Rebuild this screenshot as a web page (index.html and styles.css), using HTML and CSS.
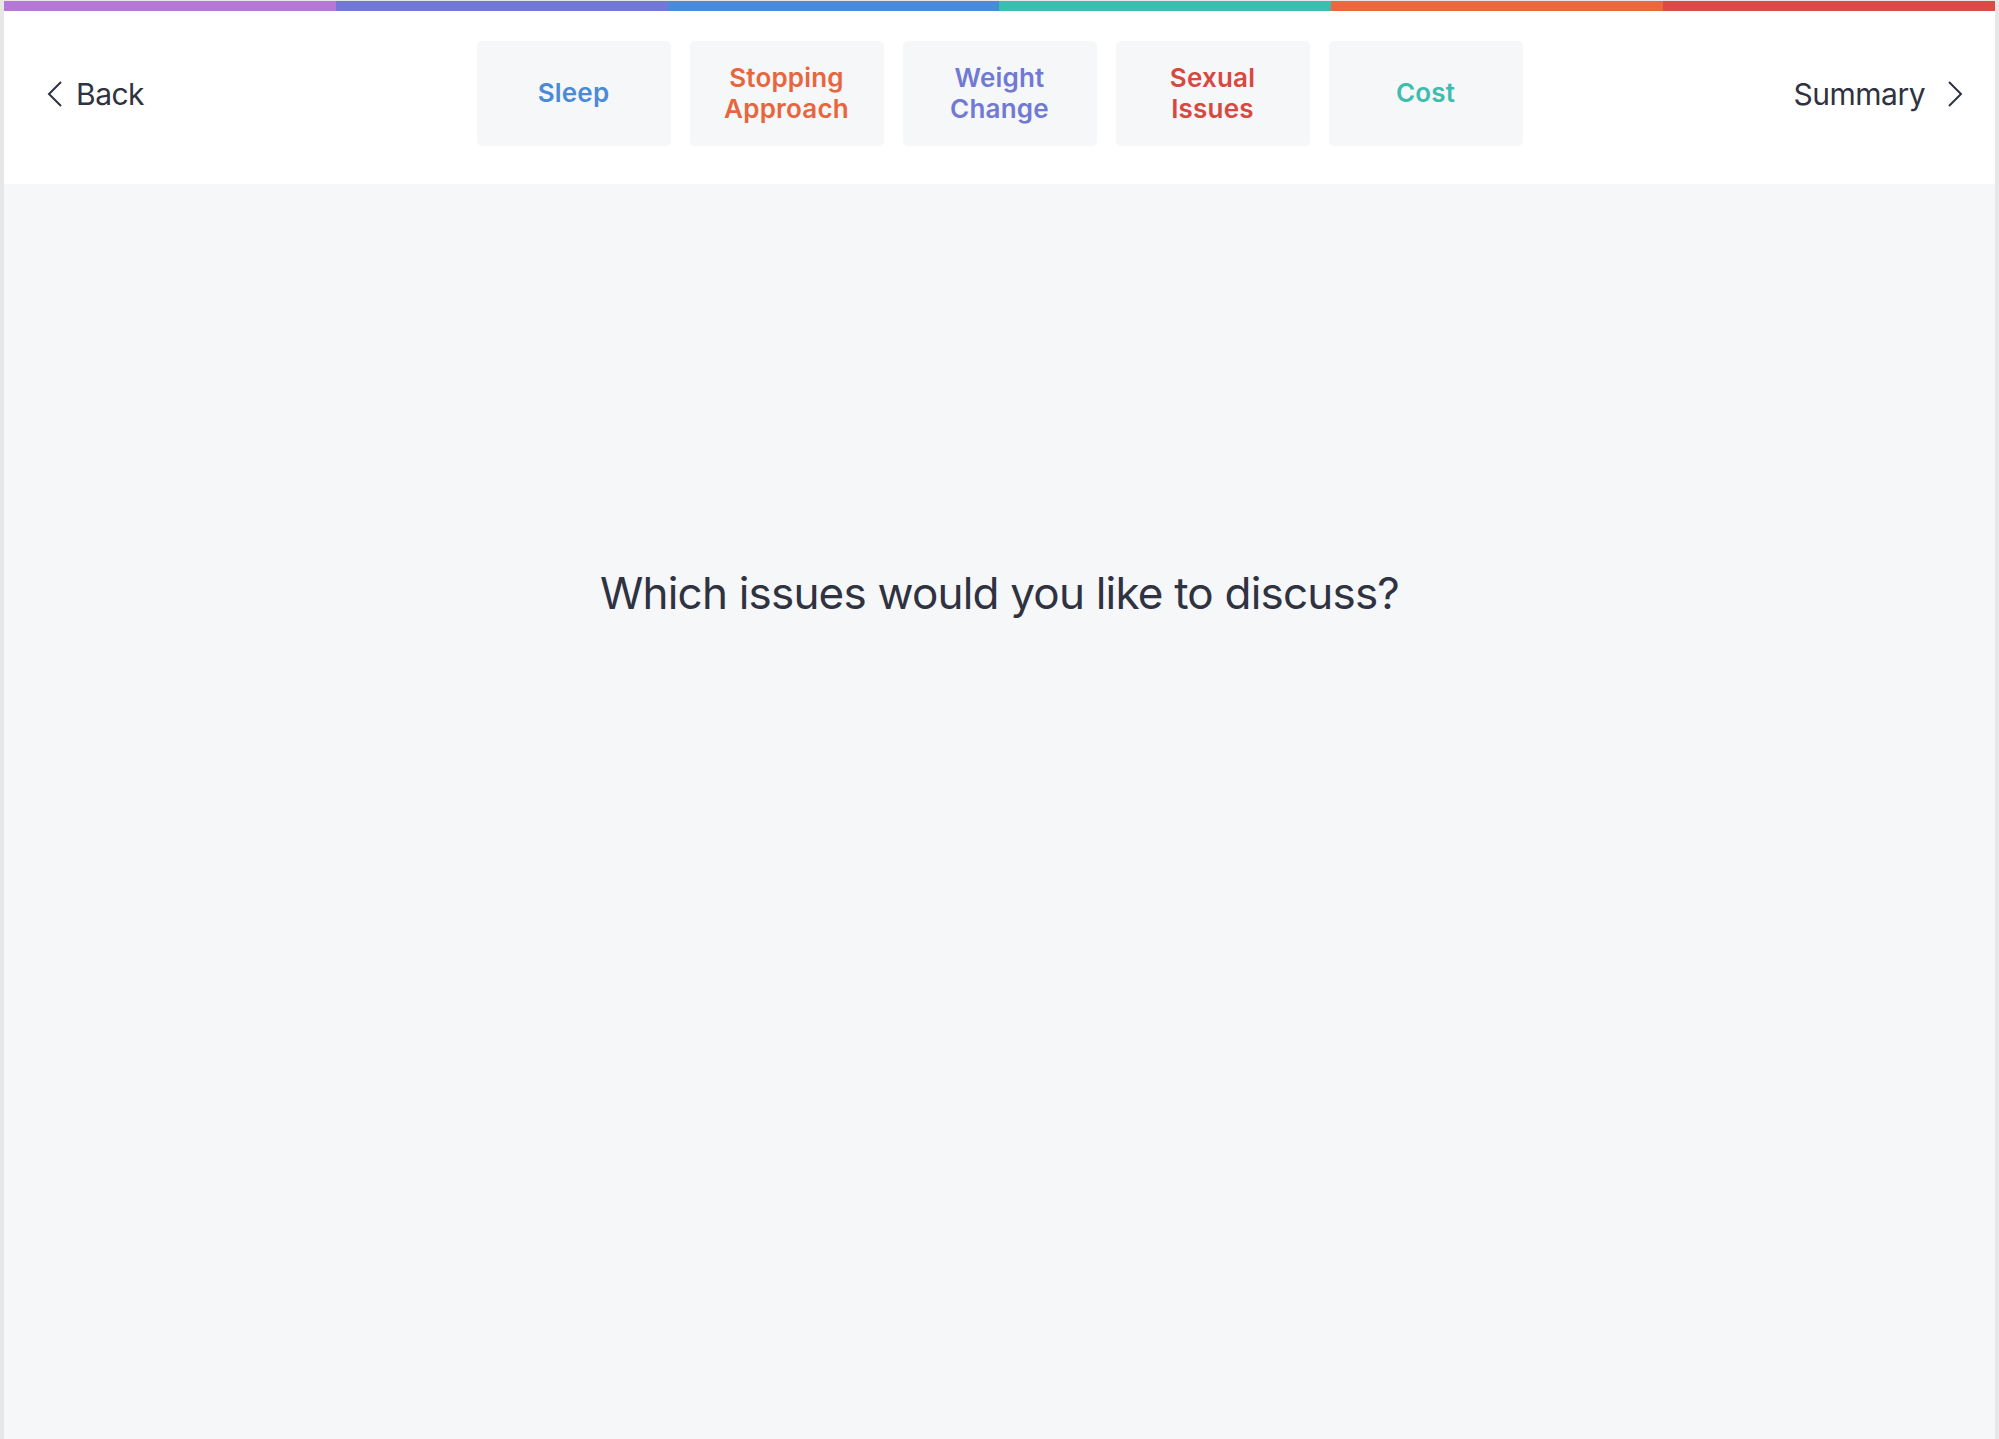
FILE: index.html
```html
<!DOCTYPE html>
<html lang="en">
<head>
<meta charset="utf-8">
<title>Which issues would you like to discuss?</title>
<link rel="stylesheet" href="styles.css">
</head>
<body>
<div class="frame">
  <div class="progress">
    <span class="seg seg-purple"></span>
    <span class="seg seg-violet"></span>
    <span class="seg seg-blue"></span>
    <span class="seg seg-teal"></span>
    <span class="seg seg-orange"></span>
    <span class="seg seg-red"></span>
  </div>
  <header class="header">
    <a class="nav nav-back" href="#">
      <svg class="chev" viewBox="0 0 16 26" width="16" height="26"><polyline points="14,1 2,13 14,25" fill="none" stroke="#2f3241" stroke-width="2"/></svg>
      <span>Back</span>
    </a>
    <nav class="tabs">
      <a class="tab tab-blue" href="#">Sleep</a>
      <a class="tab tab-orange" href="#">Stopping<br>Approach</a>
      <a class="tab tab-violet" href="#">Weight<br>Change</a>
      <a class="tab tab-red" href="#">Sexual<br>Issues</a>
      <a class="tab tab-teal" href="#">Cost</a>
    </nav>
    <a class="nav nav-next" href="#">
      <span>Summary</span>
      <svg class="chev" viewBox="0 0 16 26" width="16" height="26"><polyline points="2,1 14,13 2,25" fill="none" stroke="#2f3241" stroke-width="2"/></svg>
    </a>
  </header>
  <main class="content">
    <h1 class="question">Which issues would you like to discuss?</h1>
  </main>
</div>
</body>
</html>
```
FILE: styles.css
```css
* { box-sizing: border-box; }
html, body {
  margin: 0;
  padding: 0;
  height: 100%;
  background: #ffffff;
  font-family: Inter, "Noto Sans", "Liberation Sans", sans-serif;
  color: #2f3241;
}
.frame {
  height: 1439px;
  display: flex;
  flex-direction: column;
  border-left: 4px solid #e7e7e7;
  border-right: 4px solid #e7e7e7;
  border-top: 1px solid #e7e7e7;
  overflow: hidden;
}
.progress {
  display: flex;
  height: 10px;
  flex: none;
}
.seg { flex: 1; }
.seg-purple { background: #b678d6; }
.seg-violet { background: #7279d4; }
.seg-blue { background: #4a8ad9; }
.seg-teal { background: #3bbdb0; }
.seg-orange { background: #e9683f; }
.seg-red { background: #da4b45; }

.header {
  flex: none;
  height: 173px;
  display: grid;
  grid-template-columns: 1fr auto 1fr;
  align-items: start;
  padding-top: 30px;
  background: #ffffff;
}
.nav {
  display: flex;
  align-items: center;
  gap: 13px;
  height: 105px;
  font-size: 30px;
  color: #2f3241;
  text-decoration: none;
  letter-spacing: -0.5px;
}
.nav-back { justify-self: start; padding-left: 43px; }
.nav-next { justify-self: end; gap: 22px; padding-right: 32px; }
.chev { display: block; }
.tabs {
  display: flex;
  gap: 19px;
}
.tab {
  width: 194px;
  height: 105px;
  padding-bottom: 2px;
  border-radius: 5px;
  background: #f6f7f9;
  display: flex;
  align-items: center;
  justify-content: center;
  text-align: center;
  font-size: 26px;
  line-height: 31px;
  font-weight: 600;
  text-decoration: none;
  letter-spacing: 0.2px;
}
.tab-blue { color: #4a8ad9; }
.tab-orange { color: #e8663d; }
.tab-violet { color: #7079d4; }
.tab-red { color: #d9483f; }
.tab-teal { color: #3bbdb0; }

.content {
  flex: 1;
  background: #f6f7f9;
  padding-top: 381px;
}
.question {
  margin: 0;
  text-align: center;
  font-size: 44px;
  line-height: 56px;
  font-weight: 400;
  letter-spacing: -0.8px;
  color: #2f3241;
}
```
